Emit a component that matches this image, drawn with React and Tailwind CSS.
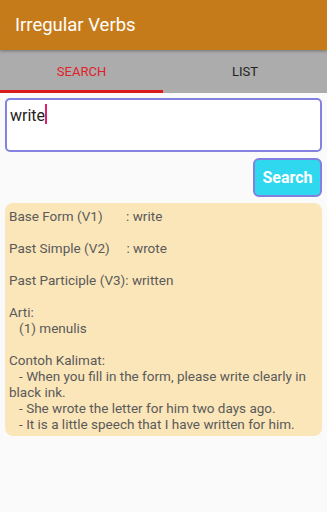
import React from 'react';

export default function App() {
  const lines = [
    'Base Form (V1)       : write',
    '',
    'Past Simple (V2)     : wrote',
    '',
    'Past Participle (V3): written',
    '',
    'Arti:',
    '   (1) menulis',
    '',
    'Contoh Kalimat:',
  ];
  return (
    <div className="flex h-[512px] w-[327px] flex-col bg-[#fafafa]" style={{ fontFamily: 'Roboto, sans-serif' }}>
      <div className="z-10 flex h-[50px] items-center bg-[#c67b1a] px-[15px] pt-[2px] text-[18.5px] text-white shadow-[0_1px_3px_rgba(0,0,0,0.35)]">
        Irregular Verbs
      </div>
      <div className="flex h-[43px] bg-[#acacac] text-[13px]">
        <div className="flex w-[163px] flex-col">
          <div className="flex flex-1 items-center justify-center pt-[4px] text-[#e0202a]">SEARCH</div>
          <div className="h-[3px] bg-[#d81b1b]" />
        </div>
        <div className="flex flex-1 items-center justify-center pt-[1px] text-[#222]">LIST</div>
      </div>
      <div className="flex flex-col px-[5px] pt-[5px]">
        <div className="h-[54px] rounded-[5px] border-2 border-[#8383df] bg-white px-[3px] pt-[1px] text-[16px] text-[#222]">
          <span>write</span>
          <span className="inline-block h-[20px] w-[2px] translate-y-[3px] bg-[#e0206a]" />
        </div>
        <div className="flex justify-end pt-[6px]">
          <div className="flex h-[39px] w-[69px] items-center justify-center rounded-[6px] border-2 border-[#8080e0] bg-[#2fd8ef] text-[16px] font-bold text-white">
            Search
          </div>
        </div>
        <div className="mt-[6px] rounded-[8px] bg-[#fbe6b9] pb-[4px] pl-[4px] pt-[5px] text-[13.5px] leading-[16px] text-[#5a5a5a]">
          {lines.map((l, i) => (
            <div key={i} className="h-[16px] whitespace-pre">{l}</div>
          ))}
          <div className="whitespace-pre-wrap">{'   - When you fill in the form, please write clearly in black ink.'}</div>
          <div className="whitespace-pre">{'   - She wrote the letter for him two days ago.'}</div>
          <div className="whitespace-pre">{'   - It is a little speech that I have written for him.'}</div>
        </div>
      </div>
    </div>
  );
}
